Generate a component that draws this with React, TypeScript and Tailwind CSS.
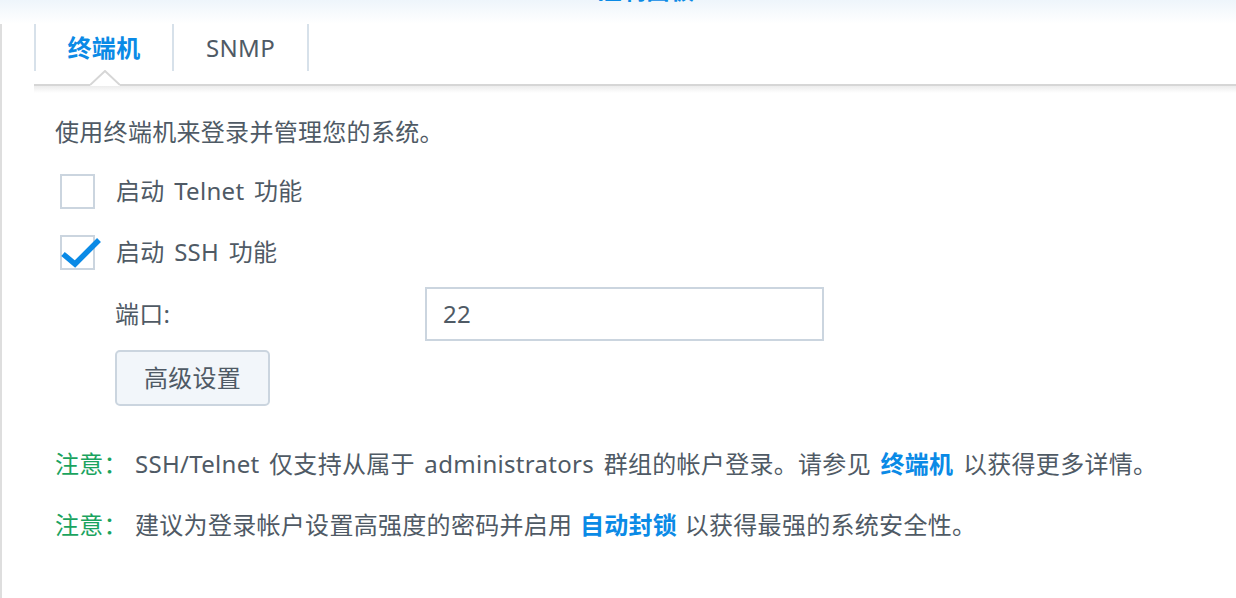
const font = {
  fontFamily: '"Noto Sans", "Noto Sans CJK SC", sans-serif',
};

function Checkbox({ checked }: { checked?: boolean }) {
  return (
    <div className="relative w-[35px] h-[35px] border-2 border-[#cbd5df] bg-white shrink-0">
      {checked && (
        <svg
          className="absolute -left-[2px] -top-[2px] overflow-visible"
          width="40"
          height="36"
          viewBox="0 0 40 36"
        >
          <path
            d="M3 19 L15 29 L39 5"
            fill="none"
            stroke="#0a8ae6"
            strokeWidth="5.5"
            strokeLinejoin="miter"
            strokeLinecap="butt"
          />
        </svg>
      )}
    </div>
  );
}

function Note({ children }: { children: React.ReactNode }) {
  return (
    <div className="flex items-center h-[30px]">
      <span className="text-[#1aa35e] w-[80px] shrink-0">注意：</span>
      <span>{children}</span>
    </div>
  );
}

export default function App() {
  return (
    <div
      className="w-[1236px] h-[598px] bg-white overflow-hidden text-[24px] text-[#4f5a65] tracking-[0.3px]"
      style={font}
    >
      <div className="h-[24px] bg-gradient-to-b from-[#eef5fb] to-white flex justify-center">
        <span className="-mt-[24px] pl-[56px] font-bold text-[#0a8ae6] leading-[28px]">
          控制面板
        </span>
      </div>
      <div className="border-l-2 border-[#dedede] h-[574px] pl-[32px]">
        <div className="relative">
          <div className="flex h-[47px] text-[24px]">
            <div className="w-[2px] bg-[#d7e1ea]" />
            <div className="w-[136px] flex items-center justify-center font-bold text-[#0a8ae6]">
              终端机
            </div>
            <div className="w-[2px] bg-[#d7e1ea]" />
            <div className="w-[133px] flex items-center justify-center text-[#4f5a65]">
              SNMP
            </div>
            <div className="w-[2px] bg-[#d7e1ea]" />
          </div>
          <div className="h-[13px]" />
          <div className="h-[2px] bg-[#d6d6d6]" />
          <div className="h-[7px] bg-gradient-to-b from-[#ececec] to-white" />
          <svg
            className="absolute left-[56px] top-[46px]"
            width="30"
            height="18"
            viewBox="0 0 30 18"
          >
            <polygon points="0,15 15,1 30,15 30,16 0,16" fill="white" />
            <polyline
              points="0,15 15,1 30,15"
              fill="none"
              stroke="#d6d6d6"
              strokeWidth="2"
            />
          </svg>
        </div>

        <div className="pl-[21px] pt-[24px]">
          <div className="h-[30px] flex items-center">使用终端机来登录并管理您的系统。</div>

          <div className="mt-[26px] flex items-center gap-[21px] pl-[5px]">
            <Checkbox />
            <span className="[word-spacing:3px]">启动 Telnet 功能</span>
          </div>
          <div className="mt-[25px] flex items-center gap-[21px] pl-[5px]">
            <Checkbox checked />
            <span className="[word-spacing:3px]">启动 SSH 功能</span>
          </div>

          <div className="mt-[17px] pl-[60px]">
            <div className="flex items-center">
              <span className="w-[310px]">端口:</span>
              <div className="w-[399px] h-[54px] border-2 border-[#cbd5df] flex items-center px-[16px]">
                22
              </div>
            </div>
            <button className="mt-[9px] w-[155px] h-[56px] rounded-[5px] border-2 border-[#cbd5df] bg-[#f2f6fa] text-[#4f5a65]">
              高级设置
            </button>
          </div>

          <div className="mt-[43px] [word-spacing:3px]">
            <Note>
              SSH/Telnet 仅支持从属于 administrators 群组的帐户登录。请参见{" "}
              <span className="font-bold text-[#0a8ae6]">终端机</span> 以获得更多详情。
            </Note>
          </div>
          <div className="mt-[31px] [word-spacing:1px]">
            <Note>
              建议为登录帐户设置高强度的密码并启用{" "}
              <span className="font-bold text-[#0a8ae6]">自动封锁</span> 以获得最强的系统安全性。
            </Note>
          </div>
        </div>
      </div>
    </div>
  );
}
